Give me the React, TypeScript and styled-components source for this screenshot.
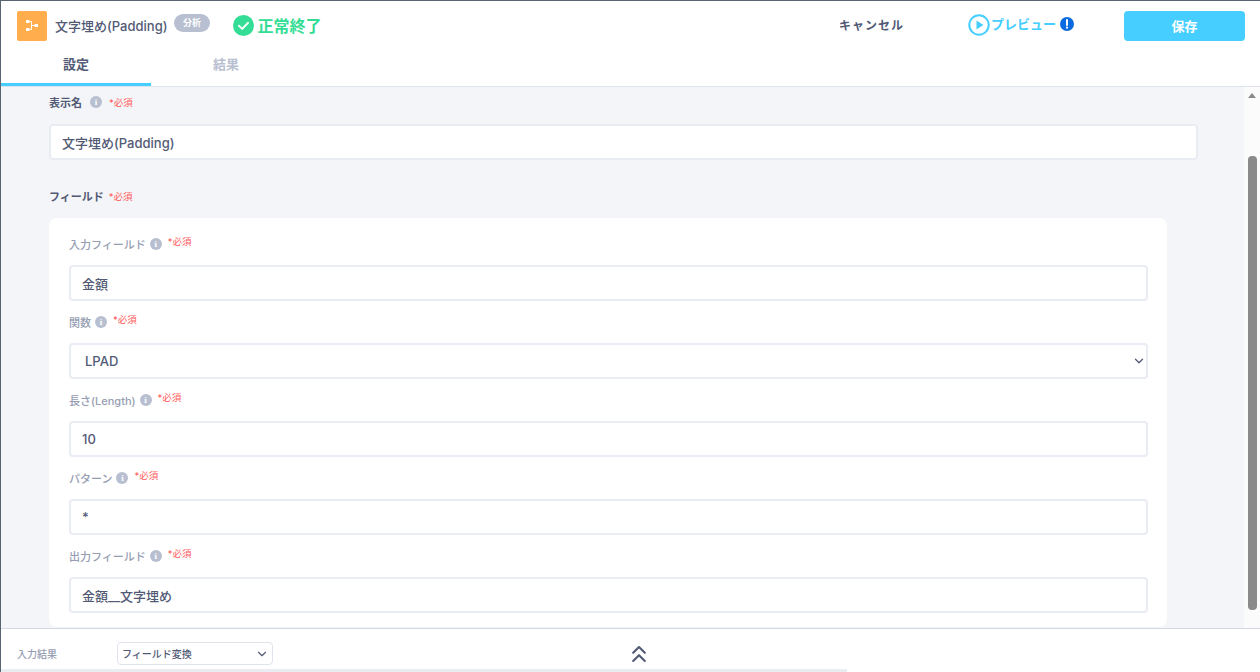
import * as React from 'react';
import styled, { createGlobalStyle } from 'styled-components';
import { ChevronDown, ChevronsUp } from 'lucide-react';

const FONT = `Inter, "Noto Sans CJK JP", sans-serif`;

const GlobalStyle = createGlobalStyle`
  html, body {
    margin: 0;
    height: 100%;
    overflow: hidden;
    background: #fff;
  }
  * {
    box-sizing: border-box;
  }
`;

const Page = styled.div`
  border-left: 1px solid #5b6472;
  border-top: 1px solid #5b6472;
  color: #525a75;
  display: flex;
  flex-direction: column;
  font-family: ${FONT};
  height: 672px;
  width: 1260px;
`;

const Header = styled.header`
  background: #fff;
  border-bottom: 1px solid #dfe3ec;
  flex: none;
  height: 86px;
`;

const TopRow = styled.div`
  align-items: center;
  display: flex;
  height: 45px;
  padding: 0 15px 0 16px;
`;

const BlockIcon = styled.div`
  align-items: center;
  background: #ffad4d;
  border-radius: 2px;
  display: flex;
  flex: none;
  height: 30px;
  justify-content: center;
  margin-top: 4px;
  width: 30px;
`;

const BlockName = styled.span`
  font-size: 13px;
  font-weight: 500;
  margin-left: 8px;
  margin-top: 4px;
  white-space: nowrap;
`;

const Tag = styled.span`
  background: #b8bfd0;
  border-radius: 9px;
  color: #fff;
  font-size: 9px;
  font-weight: 700;
  line-height: 18px;
  margin-left: 7px;
  margin-top: -2px;
  padding: 0 8.5px;
`;

const Status = styled.div`
  align-items: center;
  color: #33dd95;
  display: flex;
  font-size: 16px;
  font-weight: 700;
  gap: 4px;
  margin-left: 23px;
  margin-top: 3px;
  white-space: nowrap;
`;

const CancelButton = styled.button`
  background: none;
  border: none;
  color: #525a75;
  font-family: ${FONT};
  font-size: 12px;
  font-weight: 700;
  letter-spacing: 1px;
  margin-left: auto;
  margin-right: 64px;
  margin-top: 2px;
  padding: 0;
`;

const PreviewButton = styled.button`
  align-items: center;
  background: none;
  border: none;
  color: #45ceff;
  display: flex;
  font-family: ${FONT};
  font-size: 13px;
  font-weight: 700;
  gap: 1px;
  margin-top: 3px;
  padding: 0;

  span {
    margin-top: -3px;
  }
`;

const SaveButton = styled.button`
  background: #45ceff;
  border: none;
  border-radius: 4px;
  color: #fff;
  font-family: ${FONT};
  font-size: 13px;
  font-weight: 700;
  height: 30px;
  margin-left: 50px;
  margin-top: 4px;
  width: 121px;
`;

const Tabs = styled.nav`
  display: flex;
  height: 40px;
`;

const Tab = styled.div<{ $active?: boolean }>`
  border-bottom: 3px solid ${({ $active }) => ($active ? '#45ceff' : 'transparent')};
  color: ${({ $active }) => ($active ? '#525a75' : '#b8bfd0')};
  font-size: 13px;
  font-weight: 700;
  line-height: 37px;
  text-align: center;
  width: 150px;
`;

const Middle = styled.div`
  display: flex;
  flex: 1;
  min-height: 0;
`;

const Scroller = styled.main`
  background: #f4f5f8;
  flex: 1;
  overflow: hidden;
  padding: 7px 46px 0 48px;
`;

const LabelRow = styled.div`
  align-items: center;
  display: flex;
  height: 16px;
`;

const Label = styled.label<{ $muted?: boolean }>`
  color: ${({ $muted }) => ($muted ? '#969db2' : '#525a75')};
  font-size: 11px;
  font-weight: ${({ $muted }) => ($muted ? 500 : 700)};
  white-space: nowrap;
`;

const Required = styled.span<{ $raised?: boolean; $gap: number }>`
  color: #ff5b5b;
  font-size: 9.5px;
  margin-left: ${({ $gap }) => $gap}px;
  margin-top: ${({ $raised }) => ($raised ? '-6px' : '-1px')};
`;

const InfoDot = styled.span<{ $gap: number }>`
  align-items: center;
  background: #b8bfd0;
  border-radius: 50%;
  color: #fff;
  display: inline-flex;
  font-family: "Liberation Serif", serif;
  font-size: 9px;
  font-weight: 700;
  height: 12px;
  justify-content: center;
  margin-left: ${({ $gap }) => $gap}px;
  width: 12px;
`;

const TextInput = styled.input`
  background: #fff;
  border: 2px solid #e9ecf3;
  border-radius: 4px;
  color: #525a75;
  display: block;
  font-family: ${FONT};
  font-size: 13px;
  font-weight: 500;
  height: 36px;
  outline: none;
  padding: 0 11px;
  width: 100%;
`;

const TopField = styled.section`
  margin-bottom: 28px;
  width: 1149px;

  ${LabelRow} {
    margin-bottom: 14px;
  }
`;

const FieldTitle = styled(LabelRow)`
  margin-bottom: 14px;
`;

const Card = styled.section`
  background: #fff;
  border-radius: 8px;
  padding: 18px 19px 14px 20px;
  width: 1118px;
`;

const CardField = styled.div`
  margin-bottom: 13px;

  &:last-child {
    margin-bottom: 0;
  }

  ${LabelRow} {
    margin-bottom: 13px;
  }
`;

const SelectWrap = styled.div`
  position: relative;

  svg {
    pointer-events: none;
    position: absolute;
    right: 2px;
    top: 11px;
  }
`;

const Select = styled.select`
  appearance: none;
  background: #fff;
  border: 2px solid #e9ecf3;
  border-radius: 4px;
  color: #525a75;
  display: block;
  font-family: ${FONT};
  font-size: 13px;
  font-weight: 500;
  height: 36px;
  outline: none;
  padding: 0 14px;
  width: 100%;
`;

const ScrollTrack = styled.div`
  align-items: center;
  background: #fbfbfc;
  display: flex;
  flex: none;
  flex-direction: column;
  width: 16px;
`;

const ScrollArrow = styled.div`
  border-bottom: 5px solid #8a8a8a;
  border-left: 4px solid transparent;
  border-right: 4px solid transparent;
  height: 0;
  margin-top: 6px;
  width: 0;
`;

const ScrollThumb = styled.div`
  background: #8a8a8a;
  border-radius: 4px;
  height: 454px;
  margin-top: 58px;
  width: 9px;
`;

const Footer = styled.footer`
  align-items: center;
  background: #fff;
  border-top: 1px solid #d3d8e4;
  display: grid;
  flex: none;
  grid-template-columns: 100px 156px 1fr;
  height: 41px;
  padding: 9px 0 0 16px;
`;

const FooterLabel = styled.span`
  color: #969db2;
  font-size: 10px;
  font-weight: 500;
`;

const SmallSelect = styled.div`
  align-items: center;
  border: 1px solid #dfe3ec;
  border-radius: 4px;
  color: #525a75;
  display: flex;
  font-size: 10px;
  font-weight: 500;
  height: 23px;
  justify-content: space-between;
  padding: 0 3px 0 4px;
`;

const Collapse = styled.div`
  color: #525a75;
  display: flex;
  justify-content: center;
  padding-right: 256px;
`;

const HScrollTrack = styled.div`
  background: #fff;
  flex: none;
  height: 3px;
`;

const HScrollThumb = styled.div`
  background: #e9ecf1;
  height: 100%;
  width: 846px;
`;

const fields = [
  { label: '入力フィールド', value: '金額' },
  { label: '関数', value: 'LPAD', options: ['LPAD', 'RPAD'] },
  { label: '長さ(Length)', value: '10' },
  { label: 'パターン', value: '*' },
  { label: '出力フィールド', value: '金額__文字埋め' },
];

const App = () => {
  return (
    <Page>
      <GlobalStyle />
      <Header>
        <TopRow>
          <BlockIcon>
            <svg width="12" height="11" viewBox="0 0 12 11" fill="none">
              <rect x="0" y="0" width="3.5" height="3" rx="0.5" fill="#fff" />
              <rect x="0" y="8" width="3.5" height="3" rx="0.5" fill="#fff" />
              <rect x="8.5" y="4" width="3.5" height="3" rx="0.5" fill="#fff" />
              <path d="M3.5 1.5h2v8h-2M5.5 5.5h3" stroke="#fff" strokeWidth="1" />
            </svg>
          </BlockIcon>
          <BlockName>文字埋め(Padding)</BlockName>
          <Tag>分析</Tag>
          <Status>
            <svg width="21" height="21" viewBox="0 0 21 21">
              <circle cx="10.5" cy="10.5" r="10.5" fill="#33dd95" />
              <path d="M6 10.8l3.2 3.1 5.8-6" fill="none" stroke="#fff" strokeWidth="2" strokeLinecap="round" strokeLinejoin="round" />
            </svg>
            正常終了
          </Status>
          <CancelButton type="button">キャンセル</CancelButton>
          <PreviewButton type="button">
            <svg width="22" height="22" viewBox="0 0 22 22">
              <circle cx="11" cy="11" r="9.7" fill="none" stroke="#45ceff" strokeWidth="2" />
              <path d="M8.5 6.5l7 4.5-7 4.5z" fill="#45ceff" />
            </svg>
            <span>プレビュー</span>
            <svg width="14" height="14" viewBox="0 0 14 14" style={{ marginLeft: 3, marginTop: -3 }}>
              <circle cx="7" cy="7" r="7" fill="#0a6be0" />
              <path d="M7 3v5" stroke="#fff" strokeWidth="2" strokeLinecap="round" />
              <circle cx="7" cy="10.7" r="1.1" fill="#fff" />
            </svg>
          </PreviewButton>
          <SaveButton type="button">保存</SaveButton>
        </TopRow>
        <Tabs>
          <Tab $active>設定</Tab>
          <Tab>結果</Tab>
        </Tabs>
      </Header>
      <Middle>
        <Scroller>
          <TopField>
            <LabelRow>
              <Label>表示名</Label>
              <InfoDot $gap={8}>i</InfoDot>
              <Required $gap={7}>*必須</Required>
            </LabelRow>
            <TextInput readOnly value="文字埋め(Padding)" />
          </TopField>
          <FieldTitle>
            <Label>フィールド</Label>
            <Required $gap={5}>*必須</Required>
          </FieldTitle>
          <Card>
            {fields.map((field) => (
              <CardField key={field.label}>
                <LabelRow>
                  <Label $muted>{field.label}</Label>
                  <InfoDot $gap={4}>i</InfoDot>
                  <Required $raised $gap={6}>*必須</Required>
                </LabelRow>
                {field.options ? (
                  <SelectWrap>
                    <Select defaultValue={field.value}>
                      {field.options.map((option) => (
                        <option key={option}>{option}</option>
                      ))}
                    </Select>
                    <ChevronDown size={14} strokeWidth={2.2} color="#525a75" />
                  </SelectWrap>
                ) : (
                  <TextInput readOnly value={field.value} />
                )}
              </CardField>
            ))}
          </Card>
        </Scroller>
        <ScrollTrack>
          <ScrollArrow />
          <ScrollThumb />
        </ScrollTrack>
      </Middle>
      <Footer>
        <FooterLabel>入力結果</FooterLabel>
        <SmallSelect>
          フィールド変換
          <ChevronDown size={14} strokeWidth={2} color="#525a75" />
        </SmallSelect>
        <Collapse>
          <ChevronsUp size={28} strokeWidth={1.8} />
        </Collapse>
      </Footer>
      <HScrollTrack>
        <HScrollThumb />
      </HScrollTrack>
    </Page>
  );
};

export default App;
